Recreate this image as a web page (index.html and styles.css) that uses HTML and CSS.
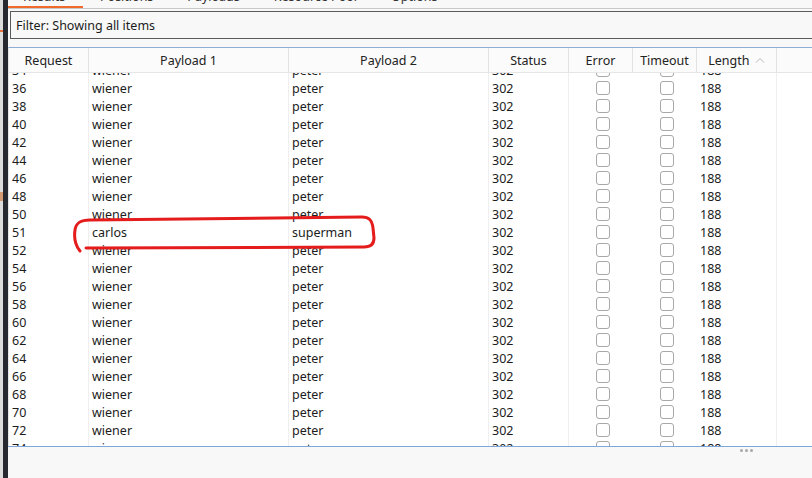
FILE: index.html
```html
<!DOCTYPE html>
<html>
<head>
<meta charset="utf-8">
<link rel="stylesheet" href="styles.css">
</head>
<body>
<div class="app">
  <div class="side">
    <div class="side-light"><span class="mark m1"></span><span class="mark m2"></span></div>
    <div class="side-dark"></div>
  </div>
  <div class="main">
    <div class="tabs">
      <span class="tab active">Results</span>
      <span class="tab">Positions</span>
      <span class="tab">Payloads</span>
      <span class="tab">Resource Pool</span>
      <span class="tab">Options</span>
    </div>
    <div class="filter">Filter: Showing all items</div>
    <div class="table">
      <div class="head">
        <div class="c c1">Request</div>
        <div class="c c2">Payload 1</div>
        <div class="c c3">Payload 2</div>
        <div class="c c4">Status</div>
        <div class="c c5">Error</div>
        <div class="c c6">Timeout</div>
        <div class="c c7">Length <svg class="sort" width="10" height="6" viewBox="0 0 10 6"><path d="M1 5.5 L5 1.5 L9 5.5" fill="none" stroke="#b8b8b8" stroke-width="1"/></svg></div>
        <div class="c c8"></div>
      </div>
      <div class="body">
        <div class="rows">
          <div class="row"><div class="c c1">34</div><div class="c c2">wiener</div><div class="c c3">peter</div><div class="c c4">302</div><div class="c c5"><span class="cb"></span></div><div class="c c6"><span class="cb"></span></div><div class="c c7">188</div><div class="c c8"></div></div>
          <div class="row"><div class="c c1">36</div><div class="c c2">wiener</div><div class="c c3">peter</div><div class="c c4">302</div><div class="c c5"><span class="cb"></span></div><div class="c c6"><span class="cb"></span></div><div class="c c7">188</div><div class="c c8"></div></div>
          <div class="row"><div class="c c1">38</div><div class="c c2">wiener</div><div class="c c3">peter</div><div class="c c4">302</div><div class="c c5"><span class="cb"></span></div><div class="c c6"><span class="cb"></span></div><div class="c c7">188</div><div class="c c8"></div></div>
          <div class="row"><div class="c c1">40</div><div class="c c2">wiener</div><div class="c c3">peter</div><div class="c c4">302</div><div class="c c5"><span class="cb"></span></div><div class="c c6"><span class="cb"></span></div><div class="c c7">188</div><div class="c c8"></div></div>
          <div class="row"><div class="c c1">42</div><div class="c c2">wiener</div><div class="c c3">peter</div><div class="c c4">302</div><div class="c c5"><span class="cb"></span></div><div class="c c6"><span class="cb"></span></div><div class="c c7">188</div><div class="c c8"></div></div>
          <div class="row"><div class="c c1">44</div><div class="c c2">wiener</div><div class="c c3">peter</div><div class="c c4">302</div><div class="c c5"><span class="cb"></span></div><div class="c c6"><span class="cb"></span></div><div class="c c7">188</div><div class="c c8"></div></div>
          <div class="row"><div class="c c1">46</div><div class="c c2">wiener</div><div class="c c3">peter</div><div class="c c4">302</div><div class="c c5"><span class="cb"></span></div><div class="c c6"><span class="cb"></span></div><div class="c c7">188</div><div class="c c8"></div></div>
          <div class="row"><div class="c c1">48</div><div class="c c2">wiener</div><div class="c c3">peter</div><div class="c c4">302</div><div class="c c5"><span class="cb"></span></div><div class="c c6"><span class="cb"></span></div><div class="c c7">188</div><div class="c c8"></div></div>
          <div class="row"><div class="c c1">50</div><div class="c c2">wiener</div><div class="c c3">peter</div><div class="c c4">302</div><div class="c c5"><span class="cb"></span></div><div class="c c6"><span class="cb"></span></div><div class="c c7">188</div><div class="c c8"></div></div>
          <div class="row"><div class="c c1">51</div><div class="c c2">carlos</div><div class="c c3">superman</div><div class="c c4">302</div><div class="c c5"><span class="cb"></span></div><div class="c c6"><span class="cb"></span></div><div class="c c7">188</div><div class="c c8"></div></div>
          <div class="row"><div class="c c1">52</div><div class="c c2">wiener</div><div class="c c3">peter</div><div class="c c4">302</div><div class="c c5"><span class="cb"></span></div><div class="c c6"><span class="cb"></span></div><div class="c c7">188</div><div class="c c8"></div></div>
          <div class="row"><div class="c c1">54</div><div class="c c2">wiener</div><div class="c c3">peter</div><div class="c c4">302</div><div class="c c5"><span class="cb"></span></div><div class="c c6"><span class="cb"></span></div><div class="c c7">188</div><div class="c c8"></div></div>
          <div class="row"><div class="c c1">56</div><div class="c c2">wiener</div><div class="c c3">peter</div><div class="c c4">302</div><div class="c c5"><span class="cb"></span></div><div class="c c6"><span class="cb"></span></div><div class="c c7">188</div><div class="c c8"></div></div>
          <div class="row"><div class="c c1">58</div><div class="c c2">wiener</div><div class="c c3">peter</div><div class="c c4">302</div><div class="c c5"><span class="cb"></span></div><div class="c c6"><span class="cb"></span></div><div class="c c7">188</div><div class="c c8"></div></div>
          <div class="row"><div class="c c1">60</div><div class="c c2">wiener</div><div class="c c3">peter</div><div class="c c4">302</div><div class="c c5"><span class="cb"></span></div><div class="c c6"><span class="cb"></span></div><div class="c c7">188</div><div class="c c8"></div></div>
          <div class="row"><div class="c c1">62</div><div class="c c2">wiener</div><div class="c c3">peter</div><div class="c c4">302</div><div class="c c5"><span class="cb"></span></div><div class="c c6"><span class="cb"></span></div><div class="c c7">188</div><div class="c c8"></div></div>
          <div class="row"><div class="c c1">64</div><div class="c c2">wiener</div><div class="c c3">peter</div><div class="c c4">302</div><div class="c c5"><span class="cb"></span></div><div class="c c6"><span class="cb"></span></div><div class="c c7">188</div><div class="c c8"></div></div>
          <div class="row"><div class="c c1">66</div><div class="c c2">wiener</div><div class="c c3">peter</div><div class="c c4">302</div><div class="c c5"><span class="cb"></span></div><div class="c c6"><span class="cb"></span></div><div class="c c7">188</div><div class="c c8"></div></div>
          <div class="row"><div class="c c1">68</div><div class="c c2">wiener</div><div class="c c3">peter</div><div class="c c4">302</div><div class="c c5"><span class="cb"></span></div><div class="c c6"><span class="cb"></span></div><div class="c c7">188</div><div class="c c8"></div></div>
          <div class="row"><div class="c c1">70</div><div class="c c2">wiener</div><div class="c c3">peter</div><div class="c c4">302</div><div class="c c5"><span class="cb"></span></div><div class="c c6"><span class="cb"></span></div><div class="c c7">188</div><div class="c c8"></div></div>
          <div class="row"><div class="c c1">72</div><div class="c c2">wiener</div><div class="c c3">peter</div><div class="c c4">302</div><div class="c c5"><span class="cb"></span></div><div class="c c6"><span class="cb"></span></div><div class="c c7">188</div><div class="c c8"></div></div>
          <div class="row"><div class="c c1">74</div><div class="c c2">wiener</div><div class="c c3">peter</div><div class="c c4">302</div><div class="c c5"><span class="cb"></span></div><div class="c c6"><span class="cb"></span></div><div class="c c7">188</div><div class="c c8"></div></div>
        </div>
      </div>
    </div>
    <div class="footer"><div class="grip"><i></i><i></i><i></i></div></div>
  </div>
</div>
<svg class="annot" width="812" height="478" viewBox="0 0 812 478">
  <path d="M 80 251 C 75 245, 74 237, 75 230 C 76 223, 80 220, 90 220 L 362 217 C 369 217, 372 220, 373 228 L 374 238 C 374 244, 371 247, 364 247 L 86 248" fill="none" stroke="#e51c1c" stroke-width="3" stroke-linecap="round" stroke-linejoin="round"/>
</svg>
</body>
</html>
```

FILE: styles.css
```css
* { box-sizing: border-box; }
html, body {
  margin: 0;
  padding: 0;
  width: 812px;
  height: 478px;
  overflow: hidden;
  background: #f8f8f8;
  font-family: "Noto Sans", "Open Sans", sans-serif;
  font-size: 12.5px;
  color: #1c1c1c;
}
.app {
  display: flex;
  height: 478px;
  position: relative;
}
.side {
  display: flex;
  flex: 0 0 8px;
}
.side-light {
  width: 3px;
  background: #dcdcdc;
  position: relative;
}
.mark { position: absolute; left: 0; width: 3px; }
.m1 { top: 30px; height: 2px; background: #e8703a; }
.m2 { top: 192px; height: 9px; background: #d49a72; }
.side-dark {
  width: 5px;
  background: #26292f;
}
.main {
  flex: 1;
  display: flex;
  flex-direction: column;
  min-width: 0;
}
.tabs {
  flex: 0 0 9px;
  height: 9px;
  overflow: hidden;
  display: flex;
  border-bottom: 1px solid #c9c9c9;
}
.tab {
  display: block;
  line-height: 14px;
  margin-top: -10px;
  height: 18px;
  padding: 0 17px 0 17px;
  color: #333;
  border-bottom: 2px solid transparent;
}
.tab.active {
  border-bottom-color: #f06a2b;
  padding-left: 15px;
  width: 75px;
}
.filter {
  flex: 0 0 28px;
  margin: 2px 0 0 2px;
  height: 28px;
  border: 1px solid #5a5a5a;
  border-right: none;
  padding-left: 5px;
  line-height: 27px;
  background: #f8f8f8;
  color: #1c1c1c;
}
.table {
  flex: 0 0 auto;
  margin-top: 8px;
  border-top: 1px solid #8eaed6;
  border-left: 1px solid #e4e4e4;
  background: #ffffff;
  display: flex;
  flex-direction: column;
}
.head {
  display: flex;
  height: 25px;
  border-bottom: 1px solid #e6e6e6;
  background: #fbfbfb;
}
.head .c {
  text-align: center;
  line-height: 25px;
  border-right: 1px solid #e2e2e2;
  padding: 0;
  color: #222;
}
.head .c8 { border-right: none; }
.sort { vertical-align: 2px; margin-left: 2px; }
.c { flex: 0 0 auto; overflow: hidden; white-space: nowrap; }
.c1 { width: 80px; }
.c2 { width: 200px; }
.c3 { width: 200px; }
.c4 { width: 80px; }
.c5 { width: 64px; }
.c6 { width: 64px; }
.c7 { width: 80px; }
.c8 { flex: 1 1 auto; }
.body {
  height: 373px;
  overflow: hidden;
  background: #ffffff;
}
.rows {
  margin-top: -12px;
}
.row {
  display: flex;
  height: 18px;
  line-height: 19px;
}
.row .c {
  padding-left: 3px;
  border-right: 1px solid transparent;
}
.row .c1, .row .c2, .row .c3, .row .c4, .row .c7 { border-right-color: #efefef; }
.row .c5, .row .c6 {
  display: flex;
  align-items: center;
  justify-content: center;
  padding-left: 4px;
}
.cb {
  display: block;
  width: 14px;
  height: 14px;
  border: 1px solid #a8a8a8;
  border-radius: 3px;
  background: #fff;
}
.footer {
  flex: 1;
  border-top: 1px solid #7ea6d8;
  background: #f8f8f8;
  position: relative;
}
.grip {
  position: absolute;
  left: 732px;
  top: 2px;
  display: flex;
  gap: 2px;
}
.grip i {
  display: block;
  width: 3px;
  height: 3px;
  border-radius: 50%;
  background: #a8a8a8;
}
.annot {
  position: absolute;
  left: 0;
  top: 0;
  pointer-events: none;
}
```
